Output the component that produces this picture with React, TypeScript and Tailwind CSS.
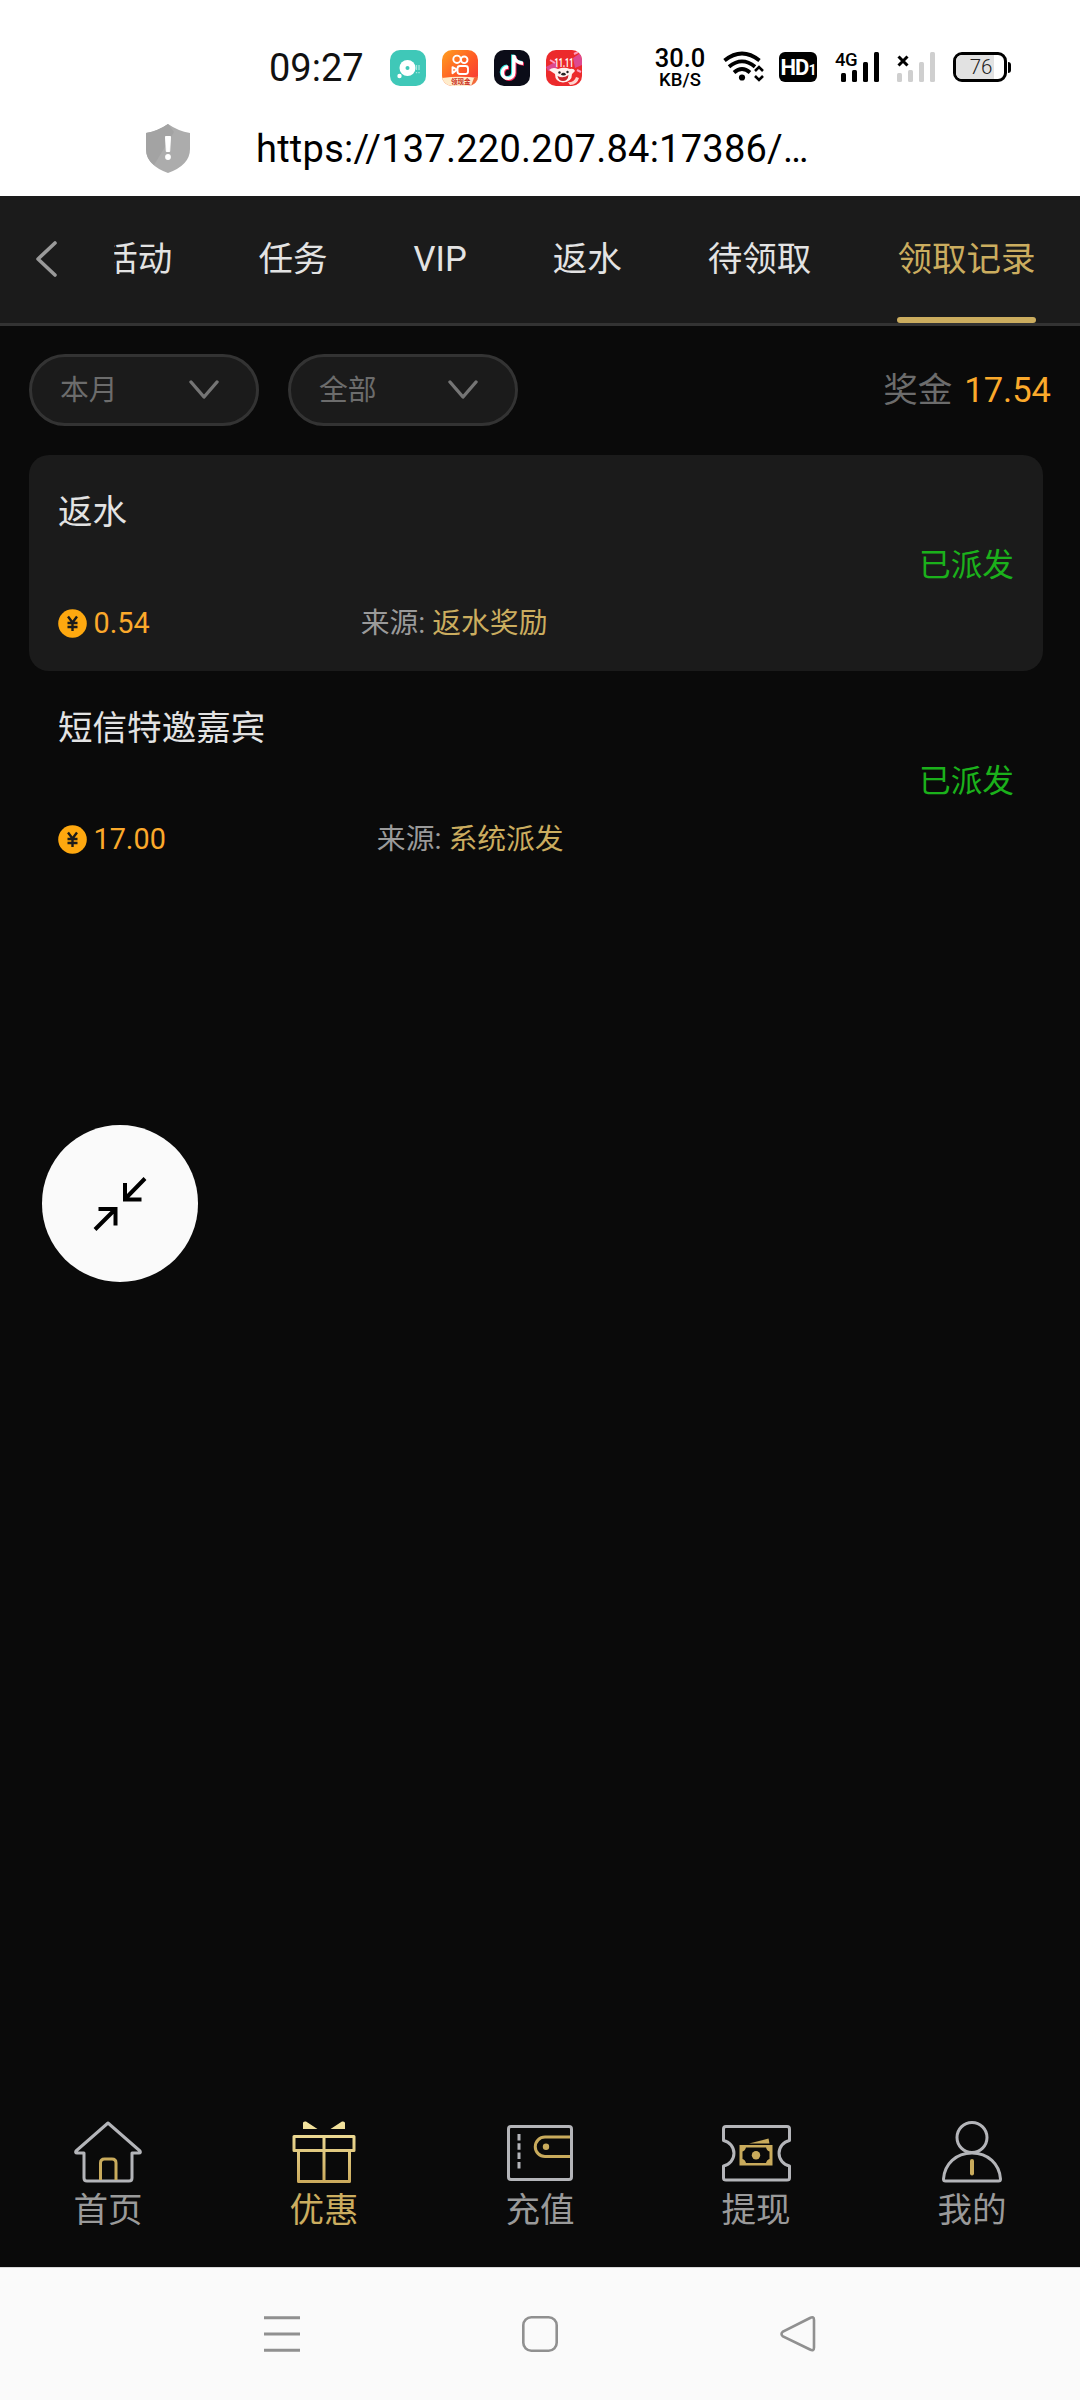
import React from 'react';

interface RecordItem {
  title: string;
  amount: string;
  source: string;
  highlighted: boolean;
}

const TABS = ['活动', '任务', 'VIP', '返水', '待领取', '领取记录'];

const RECORDS: RecordItem[] = [
  { title: '返水', amount: '0.54', source: '返水奖励', highlighted: true },
  { title: '短信特邀嘉宾', amount: '17.00', source: '系统派发', highlighted: false },
];

const GREY = '#b4b5b9';
const GOLD = '#c9ab5c';

const ChatAppIcon = () => (
  <svg viewBox="0 0 36 36" className="w-9 h-9">
    <rect width="36" height="36" rx="10" fill="#3fc8b8" />
    <circle cx="17.5" cy="18" r="8" fill="#fff" />
    <circle cx="17.5" cy="18" r="2" fill="#3fc8b8" />
    <circle cx="9.5" cy="26" r="2.2" fill="#fff" />
    <path d="M26.5 15v5M29 15v5M26.5 22v1.2M29 22v1.2" stroke="#a5e6de" strokeWidth="1.3" />
  </svg>
);

const VideoAppIcon = () => (
  <svg viewBox="0 0 36 36" className="w-9 h-9">
    <defs>
      <linearGradient id="video" x1="0" y1="0" x2="1" y2="1">
        <stop offset="0" stopColor="#ffa01f" />
        <stop offset="0.55" stopColor="#ff5a26" />
        <stop offset="1" stopColor="#f5333b" />
      </linearGradient>
      <clipPath id="videoClip"><rect width="36" height="36" rx="10" /></clipPath>
    </defs>
    <g clipPath="url(#videoClip)">
      <rect width="36" height="36" fill="url(#video)" />
      <g fill="none" stroke="#fff" strokeWidth="1.9">
        <circle cx="15" cy="9.3" r="3.7" />
        <circle cx="22.2" cy="9.8" r="3.3" />
        <rect x="15.5" y="16" width="10.5" height="8" rx="2.5" />
        <path d="M10.5 17.2l4.5 2.5l-4.5 3.5z" strokeLinejoin="round" />
      </g>
      <path d="M0 28Q18 25.5 36 28V36H0z" fill="#ffeccb" />
      <path d="M29 36l3-8l4-2v10z" fill="#f26a3a" />
    </g>
    <text x="9" y="34.3" fontSize="6.5" fontWeight="700" fill="#c9301f">领现金</text>
  </svg>
);

const NoteAppIcon = () => (
  <svg viewBox="0 0 36 36" className="w-9 h-9">
    <rect width="36" height="36" rx="10" fill="#0b0c18" />
    <g fill="none" strokeWidth="3.4">
      <path d="M18.8 4.5v17.5a5.7 5.7 0 1 1-5.7-5.7M18.8 5c.6 4.5 3.6 7.3 9.2 7.6" stroke="#2ee6e0" />
      <path d="M20.8 6v17.5a5.7 5.7 0 1 1-5.7-5.7M20.8 6.5c.6 4.5 3.6 7.3 9.2 7.6" stroke="#fb2a57" />
      <path d="M19.8 5v17.8a5.7 5.7 0 1 1-5.7-5.8M19.8 5.5c.6 4.5 3.6 7.3 9.2 7.8" stroke="#fff" />
    </g>
  </svg>
);

const ShopAppIcon = () => (
  <svg viewBox="0 0 36 36" className="w-9 h-9">
    <defs><clipPath id="shopClip"><rect width="36" height="36" rx="10" /></clipPath></defs>
    <g clipPath="url(#shopClip)">
      <rect width="36" height="36" fill="#ec2a2c" />
      <path d="M0 17L9 12L12 18L2 21zM36 2L27 8L29 18L36 15z" fill="#dd4a90" />
      <path d="M4 10l5 3M31 20l4 2M28 4l4-2" stroke="#ff9bc0" strokeWidth="2" />
      <path d="M3 20Q7 16.5 12 19Q18 16.5 24 19Q28 18 29 21L26 24Q26 32 17 32.5Q9 32 9 24z" fill="#fff1ee" />
      <path d="M22 32Q28 33 30 27l3 1Q31 35 24 35z" fill="#ffd4cf" />
      <path d="M11.5 26q5.5 3 11-1q-.5 6-5.5 6q-4.500 0-5.5-5z" fill="#c9252b" />
      <circle cx="13.5" cy="22.5" r="1.2" fill="#222" />
      <circle cx="21.5" cy="22" r="1.2" fill="#222" />
      <ellipse cx="17.5" cy="24.2" rx="2.2" ry="1.4" fill="#222" />
    </g>
    <text x="8.5" y="16.5" fontSize="12" fontWeight="700" fill="#fff" textLength="19" lengthAdjust="spacingAndGlyphs">11.11</text>
  </svg>
);

const WifiIcon = () => (
  <svg viewBox="0 0 42 32" className="w-[42px] h-8">
    <g fill="none" stroke="#000" strokeWidth="3.8">
      <path d="M1.5 10.5Q19 -3.5 36.5 10.5" />
      <path d="M6 16.8Q19 6 32 16.8" />
      <path d="M11 22.5Q19 15.5 27 22.5" />
    </g>
    <circle cx="19" cy="27.5" r="3.1" />
    <path d="M32 21l4-4l4 4M32 26l4 4l4-4" fill="none" stroke="#000" strokeWidth="2.6" />
  </svg>
);

const SignalBars = ({ color }: { color: string }) => (
  <svg viewBox="0 0 38 30" className="w-[38px] h-[30px]" fill={color}>
    <rect x="0" y="21" width="5" height="9" rx="1.5" />
    <rect x="11" y="18" width="5" height="12" rx="1.5" />
    <rect x="22" y="10" width="5" height="20" rx="1.5" />
    <rect x="33" y="0" width="5" height="30" rx="1.5" />
  </svg>
);

const BatteryIcon = () => (
  <div className="flex items-center">
    <div className="relative w-[54px] h-[30px] rounded-[9px] border-[3px] border-black overflow-hidden">
      <div className="w-[38px] h-full bg-[#e2e2e2]" />
      <span className="absolute inset-0 pl-[2px] text-center text-[20.5px] leading-[25px] font-light text-[#222]">76</span>
    </div>
    <div className="ml-[1px] w-[3px] h-[11px] bg-black rounded-r-sm" />
  </div>
);

const StatusBar = () => (
  <div className="flex h-[98px] pt-[36px] pl-[269px] items-start">
    <div className="w-[121px] h-16 text-[38px] leading-[64px] text-[#111]">09:27</div>
    <div className="flex gap-4 pt-[14px] w-[263px]">
      <ChatAppIcon />
      <VideoAppIcon />
      <NoteAppIcon />
      <ShopAppIcon />
    </div>
    <div className="w-[54px] pt-[9px] text-center font-medium text-black">
      <div className="text-[25.5px] leading-[26px]">30.0</div>
      <div className="text-[18.5px] leading-[18px]">KB/S</div>
    </div>
    <div className="ml-[16px] pt-[14px]"><WifiIcon /></div>
    <div className="ml-[14px] mt-4 flex w-[38px] h-[30px] items-baseline justify-center rounded-[6px] bg-black text-white font-bold text-[22px] leading-[31px] tracking-[-1px]">
      HD<span className="text-[14px]">1</span>
    </div>
    <div className="relative ml-[24px] pt-4">
      <SignalBars color="#000" />
      <span className="absolute left-[-6px] top-[14px] text-[18.5px] leading-5 tracking-[-0.5px] font-medium">4G</span>
    </div>
    <div className="relative ml-[18px] pt-4">
      <SignalBars color="#cfcfcf" />
      <svg viewBox="0 0 12 12" className="absolute left-0 top-[19px] w-3 h-3">
        <path d="M1.5 1.5l9 9M10.5 1.5l-9 9" stroke="#000" strokeWidth="3" />
      </svg>
    </div>
    <div className="ml-[18px] pt-4"><BatteryIcon /></div>
  </div>
);

const UrlBar = () => (
  <div className="flex h-[98px] items-center pl-[146px] pt-[2px]">
    <svg viewBox="0 0 44 49" className="w-[44px] h-[49px]">
      <path d="M22 0Q32 7 44 9V25Q44 41 22 49Q0 41 0 25V9Q12 7 22 0z" fill="#acacac" />
      <path d="M22 0Q12 7 0 9V25Q0 35 8 41L28 8z" fill="#a3a3a3" />
      <path d="M19.5 12.5h5l-.8 15h-3.4z" fill="#fff" stroke="#fff" strokeLinejoin="round" />
      <circle cx="22" cy="33" r="2.9" fill="#fff" />
    </svg>
    <span className="ml-[66px] pt-[2px] text-[38px] leading-[50px] tracking-[0.25px] text-black whitespace-nowrap">https://137.220.207.84:17386/…</span>
  </div>
);

const TabHeader = () => (
  <div className="flex h-[130px] bg-[#1b1b1b] border-b-[3px] border-[#333]">
    <div className="w-[114px] shrink-0 pt-[45px] pl-[35px]">
      <svg viewBox="0 0 22 36" className="w-[22px] h-9">
        <path d="M20 2L3 18L20 34" fill="none" stroke="#9a9a9a" strokeWidth="3.6" strokeLinecap="round" strokeLinejoin="round" />
      </svg>
    </div>
    {/* the strip is scrolled to its end, so the first tab runs under the back button */}
    <div className="flex flex-1 justify-end gap-[86px] overflow-hidden pr-[44.4px]">
      {TABS.map((tab) => {
        const active = tab === '领取记录';
        return (
          <div key={tab} className={`flex flex-col shrink-0 justify-between text-[34.56px] leading-[127px] whitespace-nowrap ${active ? 'text-[#cbad5f]' : 'text-[#e3e3e3]'}`}>
            <div className="h-[121px]">{tab}</div>
            {active && <div className="h-[6px] rounded-full bg-[#cbad5f]" />}
          </div>
        );
      })}
    </div>
  </div>
);

const FilterPill = ({ label }: { label: string }) => (
  <div className="flex w-[230px] h-[72px] items-center justify-between rounded-full border-[3px] border-[#333] bg-[#1b1b1b] pl-[28px] pr-[37px]">
    <span className="text-[28.8px] leading-[66px] text-[#6c6c6c]">{label}</span>
    <svg viewBox="0 0 30 20" className="w-[30px] h-5">
      <path d="M2 2L15 17L28 2" fill="none" stroke="#757575" strokeWidth="3.4" strokeLinecap="round" strokeLinejoin="round" />
    </svg>
  </div>
);

const CoinIcon = () => (
  <svg viewBox="0 0 29 29" className="w-[29px] h-[29px]">
    <circle cx="14.5" cy="14.5" r="14.3" fill="#fea80f" />
    <path d="M10 7.5l4.5 6l4.5-6M9.5 14h10M9.5 18h10M14.5 13.5v8.500" fill="none" stroke="#1b1b1b" strokeWidth="2.4" />
  </svg>
);

const RecordCard: React.FC<{ item: RecordItem }> = ({ item }) => (
  <div className={`flex w-[1014px] h-[216px] items-center justify-between rounded-[20px] px-[29px] ${item.highlighted ? 'bg-[#1b1b1b]' : ''}`}>
    <div className="flex flex-col h-full pt-[31px]">
      <div className="text-[34.56px] leading-[52px] text-[#e3e3e3]">{item.title}</div>
      <div className="flex items-center mt-[64px] h-[43px] text-[28.8px] leading-[43px]">
        <CoinIcon />
        <span className="ml-[6.5px] text-[#fba92b]">{item.amount}</span>
        <span className="ml-[211px] text-[#9a9a9a]">来源:</span>
        <span className="ml-[7px] text-[#cbad5f]">{item.source}</span>
      </div>
    </div>
    <div className="pt-[5px] text-[31.68px] leading-[48px] text-[#1bb11b]">已派发</div>
  </div>
);

const HomeIcon = () => (
  <svg viewBox="0 0 68 62" className="w-[68px] h-[62px]" fill="none" strokeWidth="3" strokeLinejoin="round">
    <path d="M34 2L2 30Q1 32 3 32H10V57Q10 60 13 60H55Q58 60 58 57V32H65Q67 32 66 30z" stroke={GREY} />
    <path d="M26.5 59V42Q26.5 38 30.5 38H38Q42 38 42 42V59" stroke={GOLD} />
  </svg>
);

const GiftIcon = () => (
  <svg viewBox="0 0 64 62" className="w-16 h-[62px]" fill="none" strokeWidth="3" strokeLinejoin="round">
    <defs>
      <linearGradient id="gift" x1="0" y1="0" x2="0" y2="62" gradientUnits="userSpaceOnUse">
        <stop offset="0" stopColor="#f5e6a2" />
        <stop offset="1" stopColor="#cbaa5c" />
      </linearGradient>
    </defs>
    <path d="M11 8V2Q11 0 14 0.5L25.5 8zM53 8V2Q53 0 50 0.5L38.5 8z" fill="url(#gift)" />
    <path d="M2 15.5H62V29.5H2zM6.5 30V60.5H57.5V30M32 15.5V60" stroke="url(#gift)" />
  </svg>
);

const WalletIcon = () => (
  <svg viewBox="0 0 66 62" className="w-[66px] h-[62px]" fill="none" strokeWidth="3">
    <path d="M64 16H38A9 9 0 0 0 38 35.5H64" stroke={GOLD} />
    <circle cx="39" cy="25.7" r="3.2" fill={GOLD} />
    <rect x="1.5" y="5.5" width="63" height="53" rx="2.5" stroke={GREY} />
    <path d="M12 13v36" stroke={GREY} strokeDasharray="6.5 2.8" />
  </svg>
);

const TicketIcon = () => (
  <svg viewBox="0 0 69 62" className="w-[69px] h-[62px]" fill="none" strokeWidth="3" strokeLinejoin="round">
    <path d="M4 5.5H65Q67.5 5.5 67.5 8V19.5A13 13 0 0 0 67.5 45V57Q67.5 59 65 59H4Q1.5 59 1.5 57V45A13 13 0 0 0 1.5 19.5V8Q1.5 5.5 4 5.5z" stroke={GREY} />
    <path d="M27 22.5L46.5 17.5L47.5 22.5z" fill={GOLD} />
    <path fillRule="evenodd" d="M17.5 24H50.5V44.5H17.5zM24 26.5Q23 30 20.5 30.5V38Q23 38.5 24 42H44Q45 38.5 47.5 38V30.5Q45 30 44 26.5z" fill={GOLD} />
    <circle cx="34" cy="34.2" r="4.2" fill={GOLD} />
  </svg>
);

const UserIcon = () => (
  <svg viewBox="0 0 60 62" className="w-[60px] h-[62px]" fill="none" strokeWidth="3" strokeLinejoin="round">
    <circle cx="30" cy="16.5" r="15" stroke={GREY} />
    <path d="M1.5 58C2.5 43 14 32 30 32S57.5 43 58.5 58Q58.5 60 56.5 60H3.5Q1.5 60 1.5 58z" stroke={GREY} />
    <path d="M30 40v12.5" stroke={GOLD} strokeWidth="4" strokeLinecap="round" />
  </svg>
);

const NAV_ITEMS = [
  { label: '首页', icon: <HomeIcon />, active: false },
  { label: '优惠', icon: <GiftIcon />, active: true },
  { label: '充值', icon: <WalletIcon />, active: false },
  { label: '提现', icon: <TicketIcon />, active: false },
  { label: '我的', icon: <UserIcon />, active: false },
];

const BottomNav = () => (
  <div className="grid grid-cols-5 h-[146px]">
    {NAV_ITEMS.map((item) => (
      <div key={item.label} className="flex flex-col items-center">
        {item.icon}
        <span className={`mt-[1px] text-[34.56px] leading-[52px] ${item.active ? 'text-[#cbad5f]' : 'text-[#9a9a9a]'}`}>{item.label}</span>
      </div>
    ))}
  </div>
);

const SystemNav = () => (
  <div className="flex h-[133px] items-start justify-between bg-[#fafafa] border-t border-[#d8d8d8] pt-[48px] px-[264px]">
    <svg viewBox="0 0 36 36" className="w-9 h-9">
      <path d="M0 1.7h36M0 18h36M0 34.3h36" stroke="#909090" strokeWidth="3" />
    </svg>
    <svg viewBox="0 0 36 36" className="w-9 h-9">
      <rect x="1.3" y="1.3" width="33.4" height="33.4" rx="8" fill="none" stroke="#909090" strokeWidth="2.6" />
    </svg>
    <svg viewBox="0 0 36 36" className="w-9 h-9">
      <path d="M30 2Q34 0 34 4V31.5Q34 35.5 30 33.5L3 20.5Q0 18 3 15.5z" fill="none" stroke="#909090" strokeWidth="2.6" />
    </svg>
  </div>
);

const App: React.FC = () => {
  return (
    <div className="relative flex flex-col w-[1080px] h-[2400px] overflow-hidden bg-[#0a0a0a] font-['Roboto','Noto_Sans_CJK_SC',sans-serif]">
      <div className="bg-white h-[196px]">
        <StatusBar />
        <UrlBar />
      </div>
      <TabHeader />
      <div className="flex items-center pt-7 px-[29px] gap-[29px]">
        <FilterPill label="本月" />
        <FilterPill label="全部" />
        <div className="ml-auto flex gap-[12px] text-[34.56px] leading-[70px]">
          <span className="text-[#6c6c6c]">奖金</span>
          <span className="text-[#fba92b]">17.54</span>
        </div>
      </div>
      <div className="flex-1 pt-[29px] pl-[29px]">
        {RECORDS.map((item) => (
          <RecordCard key={item.title} item={item} />
        ))}
      </div>
      <BottomNav />
      <SystemNav />

      {/* floating exit-fullscreen button */}
      <button className="absolute left-[42px] top-[1125px] flex w-[156px] h-[157px] items-center justify-center rounded-full bg-[#fafafa]">
        <svg viewBox="0 0 54 54" className="w-[54px] h-[54px]" fill="none" stroke="#000" strokeWidth="4">
          <path d="M52 1.5L33 21M32 6V22.5H48.5M2 52.5L21 33.5M5.5 32H22.5V48.5" />
        </svg>
      </button>
    </div>
  );
};

export default App;
